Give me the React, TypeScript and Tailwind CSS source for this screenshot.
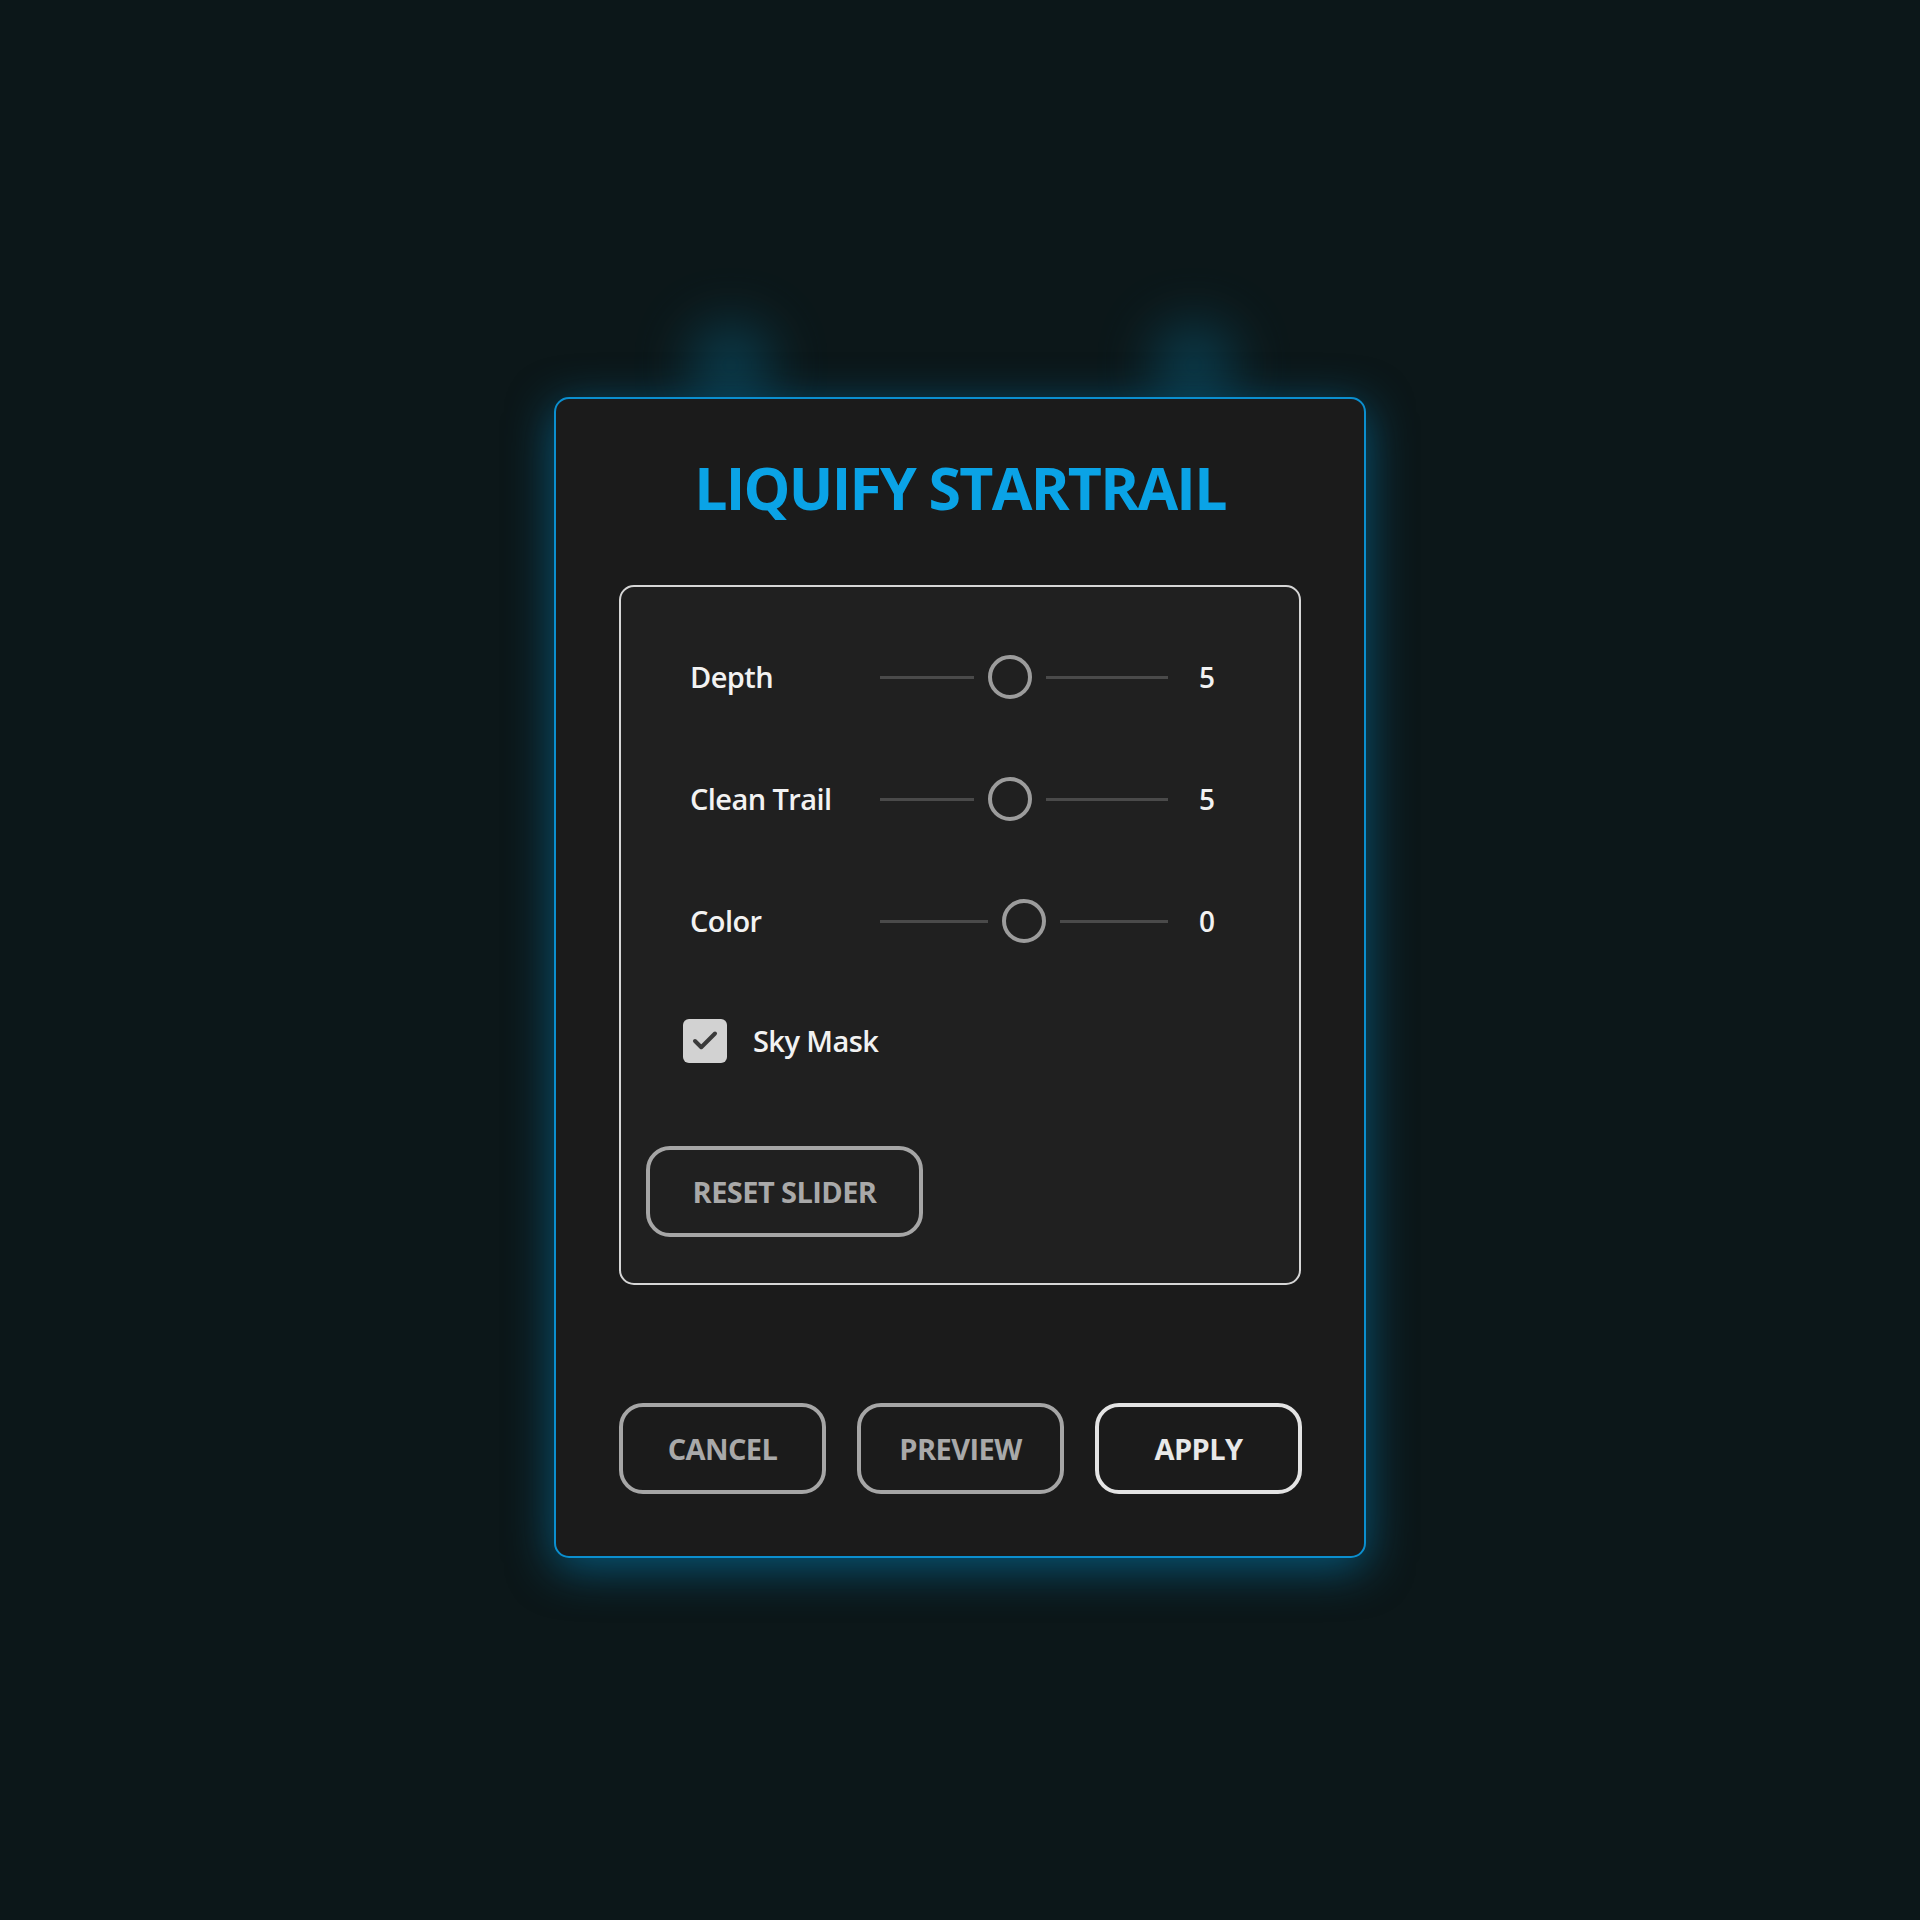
import { Check } from 'lucide-react'

type SliderRow = {
  label: string
  value: number
  leftClass: string
}

const sliders: SliderRow[] = [
  { label: 'Depth', value: 5, leftClass: 'w-[94px]' },
  { label: 'Clean Trail', value: 5, leftClass: 'w-[94px]' },
  { label: 'Color', value: 0, leftClass: 'w-[108px]' },
]

function Slider({ label, value, leftClass }: SliderRow) {
  return (
    <div className="flex h-[44px] items-center">
      <span className="w-[190px] text-[29px] font-semibold tracking-[-0.02em] text-[#f2f2f2]">{label}</span>
      <div className="flex w-[288px] items-center">
        <div className={`${leftClass} h-[3px] bg-[#4a4a4a]`} />
        <div className="mx-[14px] h-[44px] w-[44px] shrink-0 rounded-full border-[4px] border-[#9c9c9c]" />
        <div className="h-[3px] flex-1 bg-[#4a4a4a]" />
      </div>
      <span className="ml-[31px] text-[28px] font-semibold text-[#f2f2f2]">{value}</span>
    </div>
  )
}

function OutlineButton({ label, bright, className }: { label: string; bright?: boolean; className?: string }) {
  return (
    <button
      className={`flex h-[91px] shrink-0 items-center justify-center rounded-[24px] border-[4px] text-[29px] font-bold tracking-[-0.02em] ${
        bright ? 'border-[#e4e4e4] text-[#e8e8e8]' : 'border-[#a6a6a6] text-[#a9a9a9]'
      } ${className ?? ''}`}
    >
      {label}
    </button>
  )
}

export default function App() {
  return (
    <div
      className="relative flex h-[1920px] w-full justify-center overflow-hidden bg-[#0c1719] pt-[397px]"
      style={{ fontFamily: '"Open Sans", "Noto Sans", sans-serif' }}
    >
      {/* glow spots above the dialog */}
      <div className="absolute left-[691px] top-[325px] h-[80px] w-[80px] rounded-full bg-[#0a5b78] opacity-60 blur-[28px]" />
      <div className="absolute left-[1154px] top-[325px] h-[80px] w-[80px] rounded-full bg-[#0a5b78] opacity-60 blur-[28px]" />

      <div className="relative flex h-[1161px] w-[812px] flex-col rounded-[15px] border-2 border-[#0b8fcf] bg-[#1b1b1b] px-[63px] pt-[58px] pb-[62px] shadow-[0_10px_46px_rgba(0,140,200,0.55)]">
        <h1 className="text-center text-[59px] font-bold leading-[60px] tracking-[-0.03em] text-[#0aa3e6]">
          LIQUIFY STARTRAIL
        </h1>

        <div className="mt-[68px] flex h-[700px] flex-col rounded-[15px] border-2 border-[#d6d6d6] bg-[#202020] pt-[68px] pb-[45px]">
          <div className="flex flex-col gap-[78px] pl-[69px]">
            {sliders.map((s) => (
              <Slider key={s.label} {...s} />
            ))}
          </div>

          <label className="mt-[76px] ml-[62px] flex items-center gap-[26px]">
            <span className="flex h-[44px] w-[44px] items-center justify-center rounded-[6px] bg-[#d2d2d2]">
              <Check className="h-[30px] w-[30px] text-[#3b3b3b]" strokeWidth={3.2} />
            </span>
            <span className="text-[29px] font-semibold tracking-[-0.02em] text-[#f2f2f2]">Sky Mask</span>
          </label>

          <OutlineButton label="RESET SLIDER" className="mt-[83px] ml-[25px] w-[277px]" />
        </div>

        <div className="mt-auto flex gap-[31px]">
          <OutlineButton label="CANCEL" className="w-[207px]" />
          <OutlineButton label="PREVIEW" className="w-[207px]" />
          <OutlineButton label="APPLY" bright className="w-[207px]" />
        </div>
      </div>
    </div>
  )
}
